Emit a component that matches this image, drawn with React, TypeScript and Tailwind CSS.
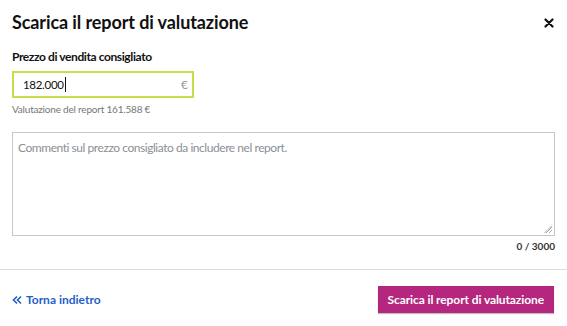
import React from "react";

export default function App() {
  return (
    <div className="w-[567px] h-[326px] bg-white text-[#1a1a1a] flex flex-col" style={{ fontFamily: "Lato, 'Liberation Sans', sans-serif" }}>
      <div className="flex items-center justify-between px-3 pt-[11px]">
        <h1 className="text-[18px] font-bold leading-[23px] tracking-[-0.1px] text-[#111]">Scarica il report di valutazione</h1>
        <button className="mr-[1px] text-[#111]">
          <svg width="10" height="10" viewBox="0 0 10 10"><path d="M1.5 1.5 L8.5 8.5 M8.5 1.5 L1.5 8.5" stroke="#111" strokeWidth="2.2" strokeLinecap="round" /></svg>
        </button>
      </div>
      <div className="px-3 mt-[15px]">
        <div className="text-[12px] font-bold leading-[16px] tracking-[-0.4px] text-[#111]">Prezzo di vendita consigliato</div>
        <div className="mt-[6px] w-[182px] h-[27px] border-2 border-[#c9dd4a] flex items-center justify-between pl-[9px] pr-[4px]">
          <span className="text-[11.5px] tracking-[-0.3px] text-[#111] flex items-center">182.000<span className="inline-block w-px h-[15px] bg-[#111] ml-px" /></span>
          <span className="text-[12px] text-[#999]">€</span>
        </div>
        <div className="mt-[4px] text-[10px] tracking-[-0.2px] text-[#777] leading-[14px]">Valutazione del report 161.588 €</div>
        <div className="mt-[16px] h-[104px] border border-[#c6c6c6] relative">
          <div className="pl-[5px] pt-[7px] text-[12px] tracking-[-0.45px] text-[#8a8f96] leading-[16px]">Commenti sul prezzo consigliato da includere nel report.</div>
          <svg className="absolute right-[1px] bottom-[1px]" width="9" height="9" viewBox="0 0 9 9"><path d="M8 2 L2 8 M8 5 L5 8 M8 0.5 L0.5 8" stroke="#999" strokeWidth="0.8" /></svg>
        </div>
        <div className="mt-[3px] text-right text-[10px] font-bold text-[#333] leading-[14px]">0 / 3000</div>
      </div>
      <div className="mt-[16px] border-t border-[#dcdcdc]" />
      <div className="flex items-center justify-between px-3 pt-[16px]">
        <a className="flex items-center gap-[4px] text-[12px] font-bold text-[#1f5fc9]">
          <svg width="10" height="10" viewBox="0 0 10 10"><path d="M5 1.5 L1.5 5 L5 8.5 M9 1.5 L5.5 5 L9 8.5" stroke="#1f5fc9" strokeWidth="1.6" fill="none" /></svg>
          Torna indietro
        </a>
        <button className="h-[27px] px-[10px] bg-[#b5267e] text-white text-[12px] tracking-[-0.1px] font-bold shadow-[0_1px_1px_rgba(0,0,0,0.25)] mr-px">Scarica il report di valutazione</button>
      </div>
    </div>
  );
}
